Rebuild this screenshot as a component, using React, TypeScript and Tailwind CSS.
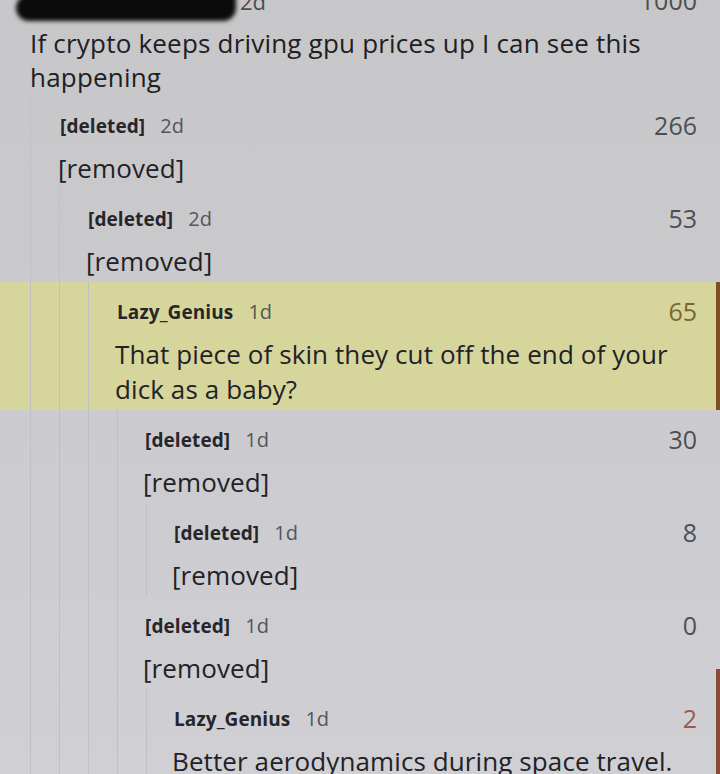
import React from 'react';

type Comment = {
  id: number;
  depth: number;
  author: string;
  age: string;
  score: number;
  body: string[];
  highlight?: boolean;
  voted?: 'up' | 'red';
};

const comments: Comment[] = [
  { id: 1, depth: 1, author: '[deleted]', age: '2d', score: 266, body: ['[removed]'] },
  { id: 2, depth: 2, author: '[deleted]', age: '2d', score: 53, body: ['[removed]'] },
  {
    id: 3,
    depth: 3,
    author: 'Lazy_Genius',
    age: '1d',
    score: 65,
    body: ['That piece of skin they cut off the end of your', 'dick as a baby?'],
    highlight: true,
    voted: 'up',
  },
  { id: 4, depth: 4, author: '[deleted]', age: '1d', score: 30, body: ['[removed]'] },
  { id: 5, depth: 5, author: '[deleted]', age: '1d', score: 8, body: ['[removed]'] },
  { id: 6, depth: 4, author: '[deleted]', age: '1d', score: 0, body: ['[removed]'] },
  {
    id: 7,
    depth: 5,
    author: 'Lazy_Genius',
    age: '1d',
    score: 2,
    body: ['Better aerodynamics during space travel.'],
    voted: 'red',
  },
];

// indent per depth, written out so tailwind picks them up
const indent: Record<number, string> = {
  1: 'pl-[58px]',
  2: 'pl-[86px]',
  3: 'pl-[115px]',
  4: 'pl-[143px]',
  5: 'pl-[172px]',
};

const guides = [30, 59, 88, 116, 145];

function ThreadGuides({ depth }: { depth: number }) {
  return (
    <div className="absolute inset-y-0 left-0 flex pointer-events-none">
      {guides.slice(0, depth).map((x, i) => (
        <div
          key={x}
          className={`h-full border-l border-[#c0c0c4] ${i === 0 ? 'ml-[30px]' : 'ml-[28px]'}`}
        />
      ))}
    </div>
  );
}

function CommentRow({ c }: { c: Comment }) {
  const scoreColor =
    c.voted === 'up' ? 'text-[#7a6632]' : c.voted === 'red' ? 'text-[#9a5a4c]' : 'text-[#4e4e52]';
  return (
    <div
      className={`relative pt-[16px] pb-[3px] pr-[23px] ${indent[c.depth]} ${
        c.highlight ? 'bg-[#d6d69c]' : ''
      }`}
    >
      <ThreadGuides depth={c.depth} />
      {c.voted && (
        <div
          className={`absolute right-0 top-0 bottom-0 w-[4px] ${
            c.voted === 'up' ? 'bg-[#7d4f22]' : 'bg-[#8a4a3a] top-[-20px]'
          }`}
        />
      )}
      <div className="relative flex items-center h-[28px]">
        <span className="ml-[2px] font-bold text-[19px] text-[#26262a] tracking-[0.1px]">
          {c.author}
        </span>
        <span className="ml-[15px] text-[20px] text-[#55555a]">{c.age}</span>
        <span className={`ml-auto text-[25px] ${scoreColor}`}>{c.score}</span>
      </div>
      <div className="relative mt-[11px] text-[26px] font-medium leading-[35px] tracking-[0.1px] text-[#222226]">
        {c.body.map((line) => (
          <div key={line}>{line}</div>
        ))}
      </div>
    </div>
  );
}

export default function App() {
  return (
    <div
      className="w-[720px] h-[774px] overflow-hidden bg-gradient-to-b from-[#c7c7c9] via-[#cbcbcf] to-[#cfcfd4]"
      style={{ fontFamily: '"Open Sans", Lato, sans-serif' }}
    >
      {/* post header, mostly cut off at top */}
      <div className="relative flex items-center h-[28px] mt-[-13px] pr-[23px]">
        <div className="ml-[16px] mt-[14px] w-[220px] h-[26px] bg-[#0b0b0b] rounded-[14px] rounded-tr-[4px] blur-[2px]" />
        <span className="ml-[4px] text-[22px] text-[#4e4e52]">2d</span>
        <span className="ml-auto text-[25px] text-[#4e4e52]">1000</span>
      </div>

      {/* post body */}
      <div className="pl-[30px] pt-[11px] text-[26px] font-medium leading-[34px] tracking-[0.2px] text-[#202024]">
        <div>If crypto keeps driving gpu prices up I can see this</div>
        <div>happening</div>
      </div>

      <div className="mt-[2px]">
        {comments.map((c) => (
          <CommentRow key={c.id} c={c} />
        ))}
      </div>
    </div>
  );
}
